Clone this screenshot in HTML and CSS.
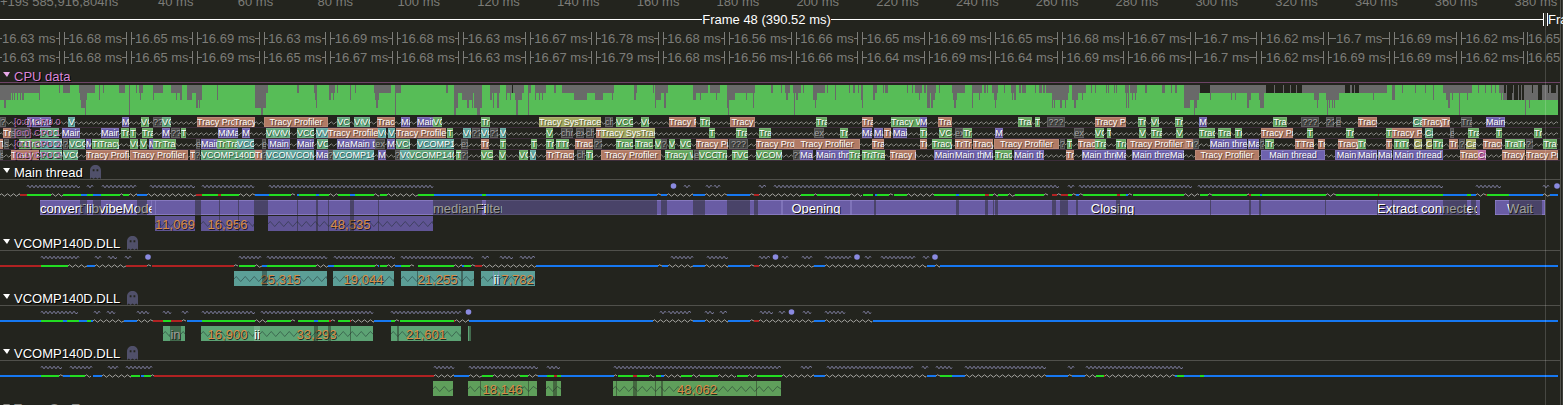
FILE: index.html
```html
<!DOCTYPE html>
<html lang="en">
<head>
<meta charset="utf-8">
<title>Timeline</title>
<link rel="stylesheet" href="styles.css">
</head>
<body>
<main class="app">
  <div class="view">
    <div class="ruler" id="ruler"></div>
    <div class="frame-row current">
      <div class="frame" id="frame-current"><span>Frame 48 (390.52 ms)</span></div>
      <div class="frame next" id="frame-next"><span>Frame 49</span></div>
    </div>
    <div class="frame-row" id="frames-a"></div>
    <div class="frame-row" id="frames-b"></div>
    <section class="cpu">
      <h2 class="head cpu-head"><button type="button"><i class="tri"></i>CPU data</button></h2>
      <div class="usage" id="usage"></div>
      <div class="cores" id="cores"></div>
    </section>
    <div id="threads"></div>
    <div class="cursor" id="cursor"></div>
  </div>
  <div class="scroll"></div>
</main>
<script src="timeline.js"></script>
</body>
</html>
```
FILE: styles.css
```css
* { box-sizing: border-box; }
html, body { margin: 0; height: 100%; overflow: hidden; }
body {
  background: #23241e;
  color: #fff;
  font: 13px/16px "Liberation Sans", Arial, sans-serif;
  font-kerning: none;
}
.app { display: grid; grid-template-columns: 1fr 3px; height: 100vh; overflow: hidden; }
.view { position: relative; min-width: 0; }
.scroll { border-left: 1px solid #50504b; border-right: 1px solid #3c3d38; }

.ruler { position: relative; height: 10px; color: #7c7c78; }
.ruler span { position: absolute; bottom: 0; white-space: nowrap; }

.frame-row { position: relative; height: 19px; color: #7c7c78; }
.frame-row.current { color: #fff; }
.frame {
  position: absolute;
  top: 3px;
  height: 13px;
  display: flex;
  align-items: center;
  justify-content: center;
  border: solid currentColor;
  border-width: 0 1px;
  white-space: nowrap;
}
.frame::before, .frame::after { content: ""; flex: 1; height: 1px; background: currentColor; }
.frame.next { border-right: 0; justify-content: start; }
.frame.next::before, .frame.next::after { display: none; }

.head {
  margin: 0;
  height: 16px;
  border-bottom: 1px solid #50504b;
  font-size: 13px;
  font-weight: 400;
  display: flex;
  align-items: center;
  gap: 7px;
}
.head button {
  display: flex;
  align-items: center;
  gap: 4px;
  padding: 2px 0 0 3px;
  border: 0;
  background: none;
  color: inherit;
  font: inherit;
  font-kerning: none;
  line-height: 16px;
  text-shadow: 1px 1px 0 #000;
}
.tri { border: solid transparent; border-width: 5px 3px 0 4px; border-top-color: currentColor; margin-bottom: 4px; }
.cpu-head { padding-top: 2px; color: #d986d9; border-bottom-color: #6d4466; }
.cpu-head .tri { color: #e9a9e9; }
.dim { color: #8c8c88; }
.ghost { width: 11px; height: 14px; fill: #50506a; }

svg { display: block; }
.usage { padding-top: 2px; }
.usage svg { width: 100%; height: 30px; }
.cores { padding: 2px 0 3px; }
.core { position: relative; height: 11px; border-bottom: 1px solid #3d2d3b; }
.core svg { width: 100%; height: 10px; }
.slot {
  position: absolute;
  top: 0;
  height: 10px;
  overflow: hidden;
  display: flex;
  justify-content: safe center;
  font-size: 9px;
  font-kerning: normal;
  line-height: 10px;
  white-space: nowrap;
  color: #fff;
  text-shadow: 1px 1px 0 rgba(0, 0, 0, .5);
  box-shadow: inset 0 0 0 1px rgba(255, 255, 255, .12);
}
.core-label {
  position: absolute;
  top: 0;
  font-size: 9px;
  font-kerning: normal;
  line-height: 10px;
  white-space: nowrap;
  color: #bd6cba;
  text-shadow: 1px 1px 0 rgba(0, 0, 0, .7);
}
.main { background: #6e62ae; }
.profiler { background: #b27a64; }
.worker { background: #65a85f; }
.vc-a { background: #5fa578; }
.vc-b { background: #5ea59d; }
.sys { background: #a3a85f; }
.csrss { background: #b5619b; }
.ext { background: #484947; color: #a5a5a5; }

.thread { padding-bottom: 4px; }
.lanes svg { width: 100%; height: 20px; }
.zones { position: relative; height: 15px; }
.zones + .zones { margin-top: 1px; }
.zone {
  position: absolute;
  top: 0;
  height: 15px;
  overflow: hidden;
  display: flex;
  justify-content: safe center;
  line-height: 17px;
  white-space: nowrap;
  text-shadow: 1px 1px 0 #111;
}
.zone.outlined { border: solid #8678bf; border-width: 1px 0; line-height: 15px; }
.zone span { position: relative; }
.zone svg { position: absolute; left: 0; top: 0; height: 15px; }
.count { color: #d68b48; text-shadow: 1px 1px 0 rgba(0, 0, 0, .7); }
.stall { position: absolute; top: 0; height: 15px; background: rgba(36, 37, 30, .45); }
.edge { position: absolute; top: 0; height: 15px; background: rgba(150, 138, 205, .5); }
.z-main { background: #695ca4; }
.z-sub { background: #605595; }
.z-teal { background: #5c9f97; }
.z-mint { background: #5ca374; }
.z-green { background: #5f9f5b; }
.z-tiny { background: #75b08a; }
.cursor { position: absolute; top: 13px; height: calc(100vh - 13px); width: 1px; background: rgba(255, 255, 255, .16); }
```
FILE: timeline.js
```js
const SPAN = 1560;
const END = 1558;
const pct = v => (v / SPAN * 100).toFixed(4) + '%';
const byId = id => document.getElementById(id);

function add(parent, cls, x, w, text, tag) {
  const el = document.createElement(tag || 'div');
  el.className = cls;
  el.style.left = pct(x);
  if (w) el.style.width = pct(w);
  if (text) {
    const s = document.createElement('span');
    s.textContent = text;
    el.appendChild(s);
  }
  parent.appendChild(el);
  return el;
}

/* Keeps only as many letters of a name as its box can show */
const pen = document.createElement('canvas').getContext('2d');
function trim(name, width, size) {
  pen.font = size + 'px "Liberation Sans", Arial, sans-serif';
  let n = 1;
  while (n < name.length && pen.measureText(name.slice(0, n)).width < width - 1) n++;
  return name.slice(0, n);
}

function zig(a, b, y, amp, half) {
  let d = 'M' + a + ' ' + y, up = true;
  for (let x = a + half / 2; x < b; x += half) {
    d += 'L' + x + ' ' + (up ? y - amp : y + amp);
    up = !up;
  }
  return d + 'L' + b + ' ' + y;
}

const svg = (h, body) =>
  `<svg viewBox="0 0 ${SPAN} ${h}" preserveAspectRatio="none" aria-hidden="true">${body}</svg>`;

/* Ruler */
const ruler = byId('ruler');
add(ruler, 'origin', 0, 0, '', 'span').textContent = '+19s 585,916,804ns';
for (let k = 0; k < 18; k++) {
  add(ruler, '', 158 + 79.8 * k, 0, '', 'span').textContent = (40 + 20 * k) + ' ms';
}

/* Frames */
function place(el, x, w) { el.style.left = pct(x); el.style.width = pct(w); }
place(byId('frame-current'), -11, 1555);
place(byId('frame-next'), 1547, 60);
byId('cursor').style.left = pct(1545);

const framesA = '63 68 65 69 63 69 68 63 67 78 68 56 66 65 69 65 68 67 7 62 7 69 62 65';
const framesB = '63 68 65 69 65 67 68 63 67 79 68 56 66 64 69 64 69 66 7 62 69 69 62 65';
function frames(id, list) {
  list.split(' ').forEach((f, i) => {
    add(byId(id), 'frame', -2.5 + 66.52 * i, i === 23 ? 54 : 62.6, '16.' + f + ' ms');
  });
}
frames('frames-a', framesA);
frames('frames-b', framesB);

/* CPU usage: "x width depth" counts idle quarters, the second list marks fully idle spans */
const dips = `0 4 2,4 2 3,6 5 2,11 29 1,12 1 2,14 1 2,17 1 2,20 1 2,22 2 2,39 1 2,59 1 1,63 7 1,79 1 1,80 1 2,81 4 3,85 1 4,86 1 2,87 8 1,99 1 2,103 1 1,119 6 1,129 1 4,136 1 1,139 4 1,140 1 2,153 10 1,153 1 2,171 11 1,176 1 2,180 2 2,187 15 1,187 5 2,196 6 2,196 2 3,199 1 3,217 1 2,255 6 3,261 2 4,262 4 3,266 2 1,297 2 1,314 3 1,315 2 2,316 1 3,329 6 1,329 2 2,333 1 2,337 1 1,350 1 2,355 1 1,374 17 1,375 4 2,376 2 3,395 1 4,396 5 1,446 2 1,454 2 4,456 26 1,456 2 3,462 5 2,467 2 3,469 3 2,472 1 3,474 3 3,477 3 4,480 2 3,490 10 1,490 2 2,493 1 3,497 2 3,506 9 1,506 1 2,510 1 2,515 1 2,516 2 4,518 4 2,522 2 1,528 1 4,529 2 1,535 1 2,536 10 1,539 1 2,542 1 2,554 2 1,562 52 1,574 13 2,595 8 2,612 1 2,634 3 1,634 2 2,653 1 1,655 1 3,656 5 2,661 7 1,664 2 3,693 3 2,696 12 1,700 1 2,710 10 1,716 1 2,727 1 3,728 1 4,729 6 2,735 20 1,746 1 2,753 1 3,771 2 1,781 1 1,785 5 1,786 2 2,793 8 1,794 1 4,796 2 2,803 1 1,813 12 1,813 4 2,815 1 3,827 1 1,835 1 2,849 1 1,853 2 1,858 1 1,861 2 2,862 1 3,873 4 1,873 2 2,883 1 1,885 3 1,907 1 1,912 1 1,915 7 1,919 1 2,924 2 1,927 9 1,927 3 3,931 2 3,933 2 2,939 1 1,952 13 1,953 4 2,954 2 3,972 10 1,972 1 3,979 1 2,984 2 1,987 1 1,992 6 1,994 3 2,995 1 3,1004 1 1,1011 5 1,1012 1 2,1014 2 2,1019 2 1,1022 4 1,1035 1 1,1039 3 1,1043 2 1,1046 23 1,1052 16 2,1052 1 3,1054 1 3,1060 2 3,1065 1 3,1072 14 1,1072 6 2,1074 2 3,1082 1 2,1091 1 1,1095 1 1,1106 1 1,1108 1 1,1114 1 1,1116 1 1,1125 4 1,1126 1 3,1128 1 3,1130 7 1,1132 1 2,1135 1 2,1145 2 1,1162 3 1,1171 1 1,1175 2 1,1184 6 3,1190 4 2,1194 1 4,1195 4 2,1195 2 3,1199 66 1,1210 1 2,1231 1 2,1235 1 2,1247 4 2,1247 2 3,1259 1 2,1260 4 3,1265 117 1,1314 5 2,1317 1 3,1326 13 2,1327 1 4,1329 1 3,1332 1 3,1334 1 3,1373 1 2,1382 5 1,1392 3 2,1402 1 1,1415 1 1,1425 1 1,1433 1 2,1443 29 1,1446 4 2,1448 2 3,1452 1 2,1459 1 4,1467 1 2,1478 1 1,1485 1 1,1491 1 1,1495 1 1,1499 8 1,1501 1 2,1503 4 2,1507 51 2,1525 1 4,1529 1 3`;
const idle = `1200 10 1,1266 8 1,1275 8 1,1284 6 1,1291 5 1,1297 5 1,1345 5 1,1352 2 1,1355 4 1,1512 1 1,512 1 1,1504 2 1,1507 5 2,1514 4 2,1519 2 2,1522 2 2,1538 4 2,1532 1 1,1548 1 1,1551 5 1`;
const bars = (list, fill) => list.split(',').map(e => {
  const [x, w, n] = e.trim().split(' ');
  return `<rect x="${x}" y="0" width="${w}" height="${n * 7.5}" fill="${fill}"/>`;
}).join('');
byId('usage').innerHTML = svg(30,
  `<g shape-rendering="crispEdges"><rect width="${END}" height="30" fill="#57bd57"/>` +
  bars(dips, '#696969') + bars(idle, '#23241e') + '</g>');

/* Cores: code, x, width */
const kinds = {
  m: ['main', 'Main thread'], p: ['profiler', 'Tracy Profiler'], w: ['worker', 'Tracy Worker'],
  g: ['worker', 'VCOMP140D.DLL'], v: ['vc-a', 'VCOMP140D.DLL'], t: ['vc-b', 'VCOMP140D.DLL'],
  o: ['sys', 'Tracy SysTrace'], O: ['sys', 'Capture'], C: ['vc-a', 'Capture'], k: ['csrss', 'Capture'],
  q: ['ext', '???'], e: ['ext', 'explorer.exe'], c: ['ext', 'chrome.exe'], s: ['ext', 'svchost.exe'], T: ['ext', 'Tracy']
};
const cores = [
  ['[0:0] CPU 0', 'q0 6,m27 14,m41 10,t68 7,m122 7,g141 8,q153 9,v162 9,p197 37,p234 21,p264 64,v337 13,v354 8,v362 8,p377 18,m401 9,m417 16,g433 9,w481 9,o539 62,c605 8,g616 17,g641 8,p669 27,w700 10,p730 25,w816 11,p862 11,w891 29,m920 7,p938 14,w1018 14,w1035 5,q1047 18,p1095 31,w1138 8,g1151 8,w1175 8,m1199 8,w1273 14,q1301 18,q1326 8,e1336 5,p1358 19,C1413 9,p1422 20,p1442 8,T1461 11,m1486 19'],
  ['[0:0] CPU 1', 'p3 8,s11 4,e15 15,v40 19,m62 18,m101 18,w121 8,w130 6,w142 11,m162 8,q171 9,w181 5,m218 9,m227 11,m242 8,v266 8,v274 8,v282 8,v297 17,t316 6,t322 6,p328 50,t378 8,t388 7,p396 50,w447 6,t463 8,q472 8,t481 8,q490 8,t500 6,g546 7,c561 12,e576 8,c586 8,p596 5,o601 54,w709 6,w736 11,w759 12,e814 10,w840 8,m862 10,m874 9,p884 7,m893 14,w920 7,g939 13,e955 8,w963 9,m995 8,e1074 10,g1095 9,w1107 4,g1139 7,w1151 11,g1176 7,w1199 16,w1218 13,w1235 7,p1261 32,w1307 6,w1346 8,w1386 6,p1392 30,C1425 8,e1450 4,w1468 11,w1496 6,w1534 8'],
  ['[0:1] CPU 2', 'p0 3,s4 5,w19 7,w26 14,t40 22,q63 5,v69 16,m86 5,w92 7,w99 20,g130 8,g140 7,m149 4,w153 9,w162 14,e196 4,m201 16,w217 9,w226 11,t237 17,e262 4,m268 22,m297 17,v317 11,m337 13,m350 25,e375 10,m387 8,v396 14,t417 37,e461 7,p481 8,w500 6,w531 6,w546 8,w556 5,w561 8,p575 18,q594 8,w616 17,w635 18,g655 6,q661 6,g669 6,g680 11,p696 32,q729 19,p756 38,p794 66,p872 12,p920 7,w932 20,p955 8,p963 9,p973 20,p994 65,q1060 5,w1067 5,p1078 17,w1095 11,w1116 10,p1127 59,p1186 7,q1193 6,m1210 37,m1248 11,q1260 4,w1265 9,p1295 6,p1301 13,p1318 7,p1338 20,w1358 8,p1386 6,w1394 7,w1401 8,O1414 8,O1426 6,w1433 10,p1449 9,q1459 6,O1466 10,p1483 19,w1505 13,w1518 7,q1526 7,w1543 14'],
  ['[0:1] CPU 3', 's0 3,p11 28,v40 22,v63 15,p86 43,p130 58,p190 5,q195 5,v201 54,p255 7,q262 4,t266 24,t290 24,m316 12,q328 5,t333 41,m378 8,q395 5,t400 9,v409 45,w456 5,q461 7,g481 12,g499 7,g519 9,t530 6,p546 9,p555 19,c577 8,w586 7,p601 60,w665 28,e694 5,g699 18,w717 10,w732 5,g737 11,g756 26,q793 7,m800 13,m816 33,w849 11,w862 10,w872 13,p890 26,m934 21,m955 29,m984 9,w995 17,m1014 30,p1066 8,m1082 34,m1116 10,m1132 38,m1170 14,p1195 64,m1261 64,m1335 23,m1358 19,m1378 14,m1393 50,p1460 18,k1478 8,p1502 23,p1526 32']
];
cores.forEach(([label, list]) => {
  const row = document.createElement('div');
  row.className = 'core';
  row.innerHTML = svg(10, `<path d="${zig(0, END, 6, 1.2, 2.5)}" fill="none" stroke="#8b8b87"/>`);
  list.split(',').forEach(e => {
    const [x, w] = e.slice(1).split(' ').map(Number);
    const [cls, name] = kinds[e[0]];
    add(row, 'slot ' + cls, x, w, trim(name, w, 9));
  });
  add(row, 'core-label', 14, 0, label);
  byId('cores').appendChild(row);
});

/* Threads. Run states: w waiting, r red, g running, b blocked; each "code start end".
   Zones: class, start, end, label, folded */
const threads = [
  { name: 'Main thread',
    run: 'w0 20,r20 27,g27 51,w51 63,g63 81,b81 87,g87 93,b93 101,g101 120,w120 123,g123 129,w129 137,b137 147,w147 196,r196 202,g202 218,r218 221,g221 239,w239 255,b255 269,g269 291,w291 295,b297 299,g299 316,b316 319,g319 329,w329 338,g338 350,b350 355,g355 374,w374 379,g380 387,w387 418,g418 434,b434 482,g482 486,b486 657,w657 661,b661 667,w667 693,b693 705,w705 727,b727 750,w750 754,r754 759,w759 801,g801 814,w814 817,g817 850,w850 862,g863 873,b875 877,g877 889,w889 893,g894 907,w907 934,g934 956,b956 959,g959 985,r985 989,g989 993,w993 998,g998 1008,w1008 1015,g1015 1044,w1044 1048,r1052 1057,w1057 1061,r1061 1068,g1068 1072,w1072 1076,b1076 1079,w1079 1083,g1083 1117,r1117 1120,g1120 1126,b1126 1128,w1128 1132,g1133 1184,w1184 1199,g1200 1208,w1208 1212,g1212 1247,w1247 1249,r1249 1251,g1251 1260,b1260 1262,g1262 1326,w1326 1336,g1336 1378,r1378 1379,g1379 1443,b1443 1467,g1467 1471,b1471 1476,w1476 1486,r1486 1487,g1487 1509,b1509 1543,w1543 1550,b1550 1558',
    samples: '27 80,87 93,102 136,150 195,202 254,269 433,684 690,706 712,714 720,759 766,774 1059,1068 1074,1079 1192,1198 1443,1476 1501,1543 1549',
    dots: [673.5, 1557],
    rows: [{
      zones: [['z-main outlined', 40, 86, 'convertTo'], ['z-main outlined', 86, 152, 'libvibeModel'], ['z-main outlined', 152, 155, ''], ['z-main outlined', 155, 433, ''],
        ['z-main outlined', 433, 502, 'medianFilter'], ['z-main outlined', 502, 781, ''], ['z-main outlined', 781, 851, 'Opening'], ['z-main outlined', 851, 1377, ''],
        ['z-main outlined', 1377, 1477, 'Extract connected'], ['z-main outlined', 1477, 1480, ''], ['z-main outlined', 1495, 1545, 'Wait']],
      wide: ['Closing', 848, 1377],
      stalls: '80 87,93 101,137 147,195 201,219 220,238 239,254 268,297 298,316 318,328 329,350 354,378 379,433 482,486 657,661 667,693 705,727 750,754 758,874 876,956 959,985 988,993 994,995 998,1052 1056,1060 1068,1076 1078,1116 1120,1210 1211,1249 1251,1259 1261,1325 1326,1377 1378,1392 1393,1443 1467,1471 1476,1509 1542',
      edges: '151 152,155 156,781 783,850 852,1495 1496,1544 1545'
    }, {
      zones: [['z-sub', 155, 195, '11,069', 1], ['z-sub', 201, 254, '16,956', 1], ['z-sub', 268, 433, '48,535', 1]],
      stalls: '219 220,238 239,297 298,316 318,328 329,350 354,378 379'
    }] },
  { name: 'VCOMP140D.DLL',
    run: 'r0 41,g41 68,w68 87,b87 95,w95 126,r126 147,w147 151,r152 234,w234 238,g239 255,w255 262,b262 267,g267 316,w316 328,b328 334,g334 375,w375 378,b378 379,g380 387,w387 395,b395 401,g401 410,w410 414,g418 454,w454 462,b462 464,g464 471,w471 475,r475 482,w482 536,b536 658,w658 662,b662 668,w668 693,b693 705,w705 728,b728 750,w750 754,r754 759,w759 814,b814 825,w825 926,b927 935,w935 940,b940 1558',
    samples: '41 79,95 101,108 117,125 131,239 261,267 327,334 395,401 473,482 489,500 513,520 535,671 693,707 728,759 770,782 788,802 812,825 851,865 871,881 915,923 929',
    dots: [148, 775.5, 857, 935],
    rows: [{
      zones: [['z-teal', 234, 327, '25,315', 1], ['z-teal', 333, 394, '19,044', 1], ['z-teal', 401, 474, '21,255', 1], ['z-teal', 481, 493, ' ', 1], ['z-teal', 493, 500, 'ii'], ['z-teal', 500, 535, '7,782', 1]],
      stalls: '262 267,417 418,461 463', edges: '493 494,498 499'
    }] },
  { name: 'VCOMP140D.DLL',
    run: 'b0 41,g41 63,b63 67,g67 79,b79 87,g87 91,b91 93,w93 124,b124 137,w137 153,r153 163,g163 171,r171 182,w182 186,b187 202,g202 255,w255 267,g267 291,w291 295,g298 314,b314 318,g318 329,r329 331,w331 335,g338 350,r350 351,w351 374,b374 391,g391 395,w395 399,g400 454,r454 455,w455 469,b469 653,w653 693,b693 705,w705 728,b728 750,w750 754,r754 759,w759 814,b814 825,w825 872,b873 1558',
    samples: '41 78,94 100,107 115,137 149,163 171,182 188,202 255,261 373,391 461,660 666,668 691,705 714,720 727,760 773,779 785,803 811,825 845,863 871',
    dots: [468.5, 791.5],
    rows: [{
      zones: [['z-mint', 163, 170, ' ', 1], ['z-mint', 170, 181, 'in'], ['z-mint', 181, 185, ' ', 1], ['z-mint', 201, 254, '16,900', 1], ['z-tiny', 254, 260, 'ii'], ['z-mint', 260, 373, '33,293', 1], ['z-mint', 391, 461, '21,601', 1], ['z-mint', 468, 471, '']],
      stalls: '170 181,314 318,328 331,350 351,397 399,469 471'
    }] },
  { name: 'VCOMP140D.DLL',
    run: 'b0 41,g41 59,w59 63,b63 70,g70 85,w85 91,b93 102,w102 131,g131 140,b141 144,g144 151,w151 154,r154 434,w434 454,b454 469,w469 482,g482 493,w493 520,g520 528,w528 538,b538 547,g547 554,r554 557,g557 561,b561 614,w614 617,g618 633,r633 637,g637 649,w649 654,g656 661,b661 664,w664 681,g681 692,w692 700,g700 718,w718 736,g737 748,w748 756,g757 782,w782 814,b814 825,w825 926,b927 936,w936 940,g940 952,b952 965,w965 1046,b1046 1068,w1068 1072,b1072 1085,w1085 1096,g1096 1104,r1104 1105,w1105 1175,b1175 1177,g1177 1184,b1184 1200,g1200 1204,b1204 1558',
    samples: '41 62,70 92,108 118,126 152,434 454,469 538,547 560,614 781,801 812,827 913,922 928,936 952,965 1046,1068 1074,1086 1183',
    dots: [],
    rows: [{
      zones: [['z-green', 433, 453, ' ', 1], ['z-green', 468, 537, '18,146', 1], ['z-green', 546, 561, ' ', 1], ['z-green', 613, 781, '48,062', 1]],
      stalls: '480 481,528 529,553 557,616 617,633 637,655 656,661 663,756 757'
    }] },
  { name: 'Tracy SysTrace', dim: true, run: '', samples: '', dots: [], rows: [] }
];
const colors = { r: '#b02222', g: '#22dc22', b: '#1678f2' };
const ghost = '<svg class="ghost" viewBox="0 0 11 14" aria-hidden="true"><path fill-rule="evenodd" d="M0 5.500C0 2 2.500 0 5.500 0S11 2 11 5.500V14L9.200 12.500 7.500 14 5.500 12.500 3.500 14 1.800 12.500 0 14ZM2.700 4.300V6.300H4.500V4.300ZM6.500 4.300V6.300H8.300V4.300Z"/></svg>';
const pairs = s => s ? s.split(',').map(p => p.split(' ').map(Number)) : [];

threads.forEach(t => {
  const sec = document.createElement('section');
  sec.className = 'thread';
  let runs = '', waits = '';
  if (t.run) t.run.split(',').forEach(e => {
    const [a, b] = e.slice(1).split(' ').map(Number);
    if (e[0] === 'w') waits += zig(a, b, 15, 1.2, 3);
    else runs += `<rect x="${a}" y="14" width="${b - a}" height="2" fill="${colors[e[0]]}"/>`;
  });
  const samples = pairs(t.samples).map(([a, b]) => zig(a, b, 6.5, 1.3, 2)).join('');
  const dots = t.dots.map(x => `<circle cx="${x}" cy="6" r="2.8" fill="#8a8ae0"/>`).join('');
  sec.innerHTML =
    `<h2 class="head${t.dim ? ' dim' : ''}"><button type="button"><i class="tri"></i>${t.name}</button>${t.dim ? '' : ghost}</h2>` +
    '<div class="lanes">' + svg(20,
      `<path d="${samples}" fill="none" stroke="#8080a2"/>` +
      `<path d="${waits}" fill="none" stroke="#a3a39f"/>` +
      `<g shape-rendering="crispEdges">${runs}</g>${dots}`) + '</div>';
  t.rows.forEach(r => {
    const row = document.createElement('div');
    row.className = 'zones';
    r.zones.forEach(([cls, a, b, label, folded]) => {
      const z = add(row, 'zone ' + cls + (folded ? ' count' : ''), a, b - a, trim(label.trim(), b - a, 13));
      if (folded) {
        z.insertAdjacentHTML('afterbegin',
          `<svg width="100%" viewBox="0 0 ${b - a} 15" preserveAspectRatio="none" aria-hidden="true"><path d="${zig(0, b - a, 8, 2.5, 4.5)}" fill="none" stroke="rgba(30,45,45,.5)"/></svg>`);
      }
    });
    if (r.wide) add(row, 'zone', r.wide[1], r.wide[2] - r.wide[1], r.wide[0]);
    pairs(r.edges).forEach(([a, b]) => add(row, 'edge', a, b - a));
    pairs(r.stalls).forEach(([a, b]) => add(row, 'stall', a, b - a));
    sec.appendChild(row);
  });
  byId('threads').appendChild(sec);
});
```
